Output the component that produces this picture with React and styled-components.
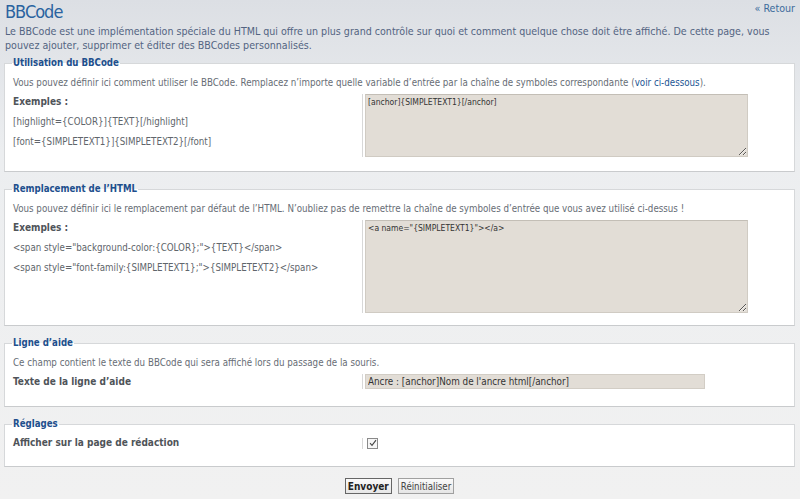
import React from 'react';
import styled, { createGlobalStyle } from 'styled-components';

const GlobalStyle = createGlobalStyle`
  html, body {
    margin: 0;
    padding: 0;
  }
  body {
    background: linear-gradient(to bottom, #dcdfe4 0px, #eceef0 150px, #f1f1f1 100%);
    min-height: 499px;
    font-family: Tahoma, "DejaVu Sans Condensed", "DejaVu Sans", Verdana, sans-serif;
    font-size: 11px;
    color: #536482;
  }
`;

const Page = styled.div`
  padding: 0 5px 0 4px;
`;

const Header = styled.div`
  display: flex;
  justify-content: space-between;
  align-items: flex-start;
  padding-left: 1px;
`;

const Title = styled.h1`
  margin: 0;
  font-family: "DejaVu Sans Condensed", "DejaVu Sans", sans-serif;
  font-weight: 400;
  font-size: 18px;
  letter-spacing: -1px;
  line-height: 24px;
  color: #2a63a0;
`;

const BackLink = styled.a`
  margin-top: 2px;
  color: #3c6b9c;
  text-decoration: none;
  font-size: 10.6px;
`;

const Intro = styled.p`
  margin: 0 0 5px 1px;
  font-size: 10.6px;
  line-height: 14px;
  color: #536482;
`;

const Box = styled.fieldset`
  margin: 0 0 11px 0;
  padding: 0 8px ${p => p.$bottom || 14}px 8px;
  background: #ffffff;
  border: 1px solid #d6d8da;
  border-bottom-color: #c9cbcd;
`;

const Legend = styled.legend`
  padding: 0 1px;
  margin-left: -1px;
  font-weight: bold;
  color: #1d4f8d;
  font-size: 9.6px;
  line-height: 12px;
`;

const Explain = styled.p`
  margin: 7px 0 4px 0;
  font-size: 9.7px;
  line-height: 14px;
  color: #676d75;
  a {
    color: #1c5593;
    text-decoration: none;
  }
`;

const Row = styled.div`
  display: flex;
  align-items: ${p => (p.$center ? 'center' : 'flex-start')};
  margin-top: ${p => p.$top || 0}px;
`;

const Term = styled.div`
  width: 349px;
  flex-shrink: 0;
  padding-top: ${p => p.$top || 0}px;
`;

const Label = styled.div`
  font-weight: bold;
  font-size: 10px;
  color: #4f5459;
  line-height: 14px;
  margin-bottom: ${p => p.$gap || 0}px;
`;

const Example = styled.div`
  font-size: 9.7px;
  line-height: 14px;
  margin-bottom: 6px;
  color: #60656b;
`;

const Field = styled.div`
  border-left: 1px solid #d8d8d8;
  padding-left: 2px;
  display: flex;
  align-items: center;
`;

const Area = styled.textarea`
  box-sizing: border-box;
  width: 383px;
  height: ${p => p.$h}px;
  margin: 0;
  padding: 2px 2px;
  background: #e2ddd6;
  border: 1px solid #d0cbc3;
  border-top-color: #c3beb6;
  font-family: inherit;
  font-size: 8.5px;
  line-height: 11px;
  color: #333333;
  resize: vertical;
  outline: none;
`;

const TextInput = styled.input`
  box-sizing: border-box;
  width: 340px;
  height: 15px;
  margin: 0;
  padding: 0 0 0 2px;
  background: #e2ddd6;
  border: 1px solid #d2cdc5;
  font-family: inherit;
  font-size: 9.8px;
  color: #333333;
  outline: none;
`;

const Check = styled.span`
  display: inline-flex;
  box-sizing: border-box;
  width: 11px;
  height: 11px;
  border: 1px solid #8a8a8a;
  background: #f6f6f6;
  align-items: center;
  justify-content: center;
  margin-left: 2px;
`;

const Buttons = styled.div`
  display: flex;
  justify-content: center;
  gap: 6px;
  padding-top: 0;
`;

const Button = styled.button`
  box-sizing: border-box;
  height: 16px;
  padding: 0 2px;
  border: 1px solid ${p => (p.$primary ? '#666' : '#a0a0a0')};
  background: linear-gradient(to bottom, #fafafa, #e6e6e6);
  font-family: inherit;
  font-size: ${p => (p.$primary ? '10px' : '9.6px')};
  line-height: 13px;
  font-weight: ${p => (p.$primary ? 'bold' : 'normal')};
  color: ${p => (p.$primary ? '#222' : '#444')};
  cursor: pointer;
`;

export default function App() {
  return (
    <Page>
      <GlobalStyle />
      <Header>
        <Title>BBCode</Title>
        <BackLink href="#">« Retour</BackLink>
      </Header>
      <Intro>
        Le BBCode est une implémentation spéciale du HTML qui offre un plus grand contrôle sur quoi et comment quelque
        chose doit être affiché. De cette page, vous pouvez ajouter, supprimer et éditer des BBCodes personnalisés.
      </Intro>

      <Box $bottom={14}>
        <Legend>Utilisation du BBCode</Legend>
        <Explain>
          Vous pouvez définir ici comment utiliser le BBCode. Remplacez n’importe quelle variable d’entrée par la chaîne
          de symboles correspondante (<a href="#">voir ci-dessous</a>).
        </Explain>
        <Row>
          <Term $top={1}>
            <Label $gap={6}>Exemples :</Label>
            <Example>[highlight={'{COLOR}'}]{'{TEXT}'}[/highlight]</Example>
            <Example>[font={'{SIMPLETEXT1}'}]{'{SIMPLETEXT2}'}[/font]</Example>
          </Term>
          <Field>
            <Area $h={63} defaultValue="[anchor]{SIMPLETEXT1}[/anchor]" />
          </Field>
        </Row>
      </Box>

      <Box $bottom={12}>
        <Legend>Remplacement de l’HTML</Legend>
        <Explain>
          Vous pouvez définir ici le remplacement par défaut de l’HTML. N’oubliez pas de remettre la chaîne de symboles
          d’entrée que vous avez utilisé ci-dessus !
        </Explain>
        <Row>
          <Term $top={1}>
            <Label $gap={6}>Exemples :</Label>
            <Example>&lt;span style="background-color:{'{COLOR}'};"&gt;{'{TEXT}'}&lt;/span&gt;</Example>
            <Example>&lt;span style="font-family:{'{SIMPLETEXT1}'};"&gt;{'{SIMPLETEXT2}'}&lt;/span&gt;</Example>
          </Term>
          <Field>
            <Area $h={93} defaultValue={'<a name="{SIMPLETEXT1}"></a>'} />
          </Field>
        </Row>
      </Box>

      <Box $bottom={17}>
        <Legend>Ligne d’aide</Legend>
        <Explain>Ce champ contient le texte du BBCode qui sera affiché lors du passage de la souris.</Explain>
        <Row $center $top={1}>
          <Term>
            <Label>Texte de la ligne d’aide</Label>
          </Term>
          <Field>
            <TextInput defaultValue="Ancre : [anchor]Nom de l'ancre html[/anchor]" />
          </Field>
        </Row>
      </Box>

      <Box $bottom={16}>
        <Legend>Réglages</Legend>
        <Row $center $top={6}>
          <Term>
            <Label>Afficher sur la page de rédaction</Label>
          </Term>
          <Field>
            <Check>
              <svg width="8" height="8" viewBox="0 0 8 8">
                <path d="M1 4.2 L3 6.3 L7 1.2" fill="none" stroke="#444" strokeWidth="1.1" />
              </svg>
            </Check>
          </Field>
        </Row>
      </Box>

      <Buttons>
        <Button $primary>Envoyer</Button>
        <Button>Réinitialiser</Button>
      </Buttons>
    </Page>
  );
}
